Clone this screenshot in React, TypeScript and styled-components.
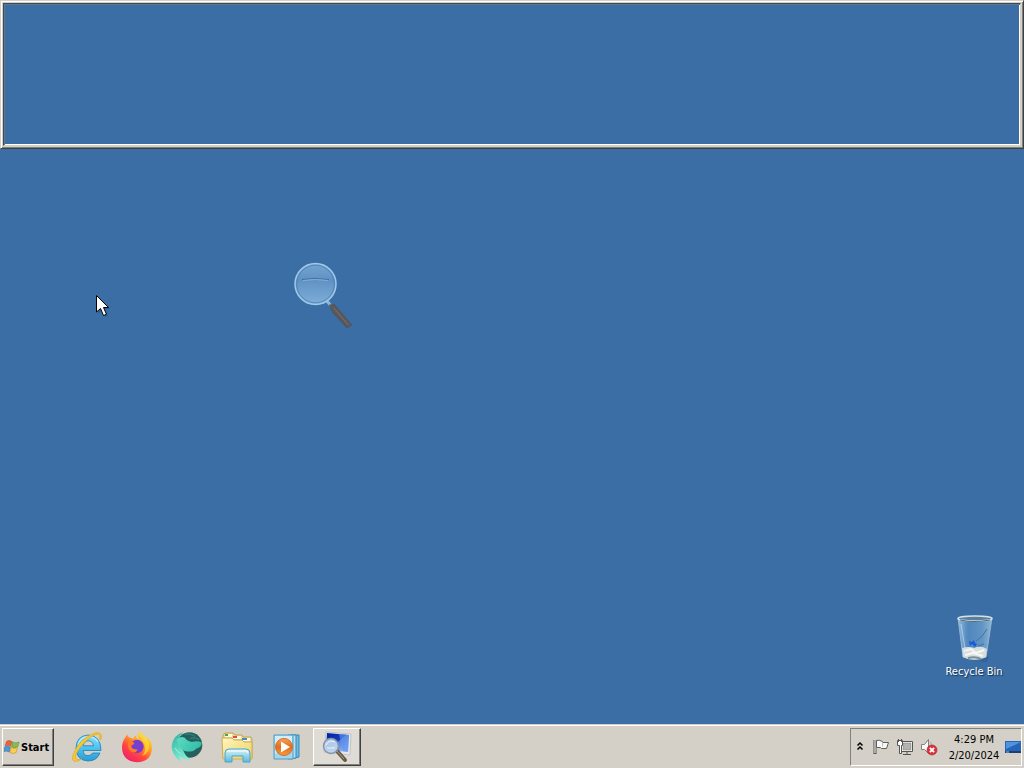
import React from "react";
import styled, { createGlobalStyle, css } from "styled-components";

const GlobalStyle = createGlobalStyle`
  *, *::before, *::after { box-sizing: border-box; }
  body {
    margin: 0;
    background: #3a6ea5;
    font-family: Tahoma, "DejaVu Sans Condensed", "DejaVu Sans", sans-serif;
    font-size: 11px;
    color: #000;
  }
`;

const Screen = styled.div`
  display: flex;
  flex-direction: column;
  min-height: 100vh;
`;

const MagnifierPane = styled.section`
  height: 149px;
  flex: none;
  background: #d4d0c8;
  border: 1px solid;
  border-color: #d4d0c8 #404040 #404040 #d4d0c8;
  box-shadow: inset 1px 1px 0 #fff, inset -1px -1px 0 #808080;
  padding: 2px;
`;

const MagnifierView = styled.div`
  height: 100%;
  background: #3a6ea5;
  border: 1px solid;
  border-color: #404850 #d4d0c8 #d4d0c8 #404850;
  box-shadow: inset 1px 1px 0 #5c7590, inset -1px -1px 0 #fff;
`;

const Desktop = styled.main`
  position: relative;
  flex: 1;
  display: flex;
  justify-content: flex-end;
  align-items: flex-end;
  padding: 0 10px 45px;
`;

const Floating = styled.svg<{ $x: number; $y: number }>`
  position: absolute;
  left: ${(p) => p.$x}px;
  top: ${(p) => p.$y}px;
`;

const DesktopIcon = styled.button`
  display: flex;
  flex-direction: column;
  align-items: center;
  gap: 2px;
  width: 80px;
  padding: 0;
  border: 0;
  background: none;
  color: #fff;
  font: inherit;
  line-height: 14px;
  text-shadow: 1px 1px 1px #16304d;
`;

const Taskbar = styled.footer`
  display: flex;
  align-items: stretch;
  flex: none;
  height: 44px;
  padding: 2px;
  background: #d4d0c8;
  border-top: 1px solid #d4d0c8;
  box-shadow: inset 0 1px 0 #fff;
`;

const raised = css`
  border: 1px solid;
  border-color: #fff #404040 #404040 #fff;
  box-shadow: inset -1px -1px 0 #808080;
`;

const StartButton = styled.button`
  ${raised}
  display: flex;
  align-items: center;
  gap: 1px;
  width: 52px;
  margin-top: 1px;
  padding: 0 0 0 1px;
  background: #d4d0c8;
  color: #000;
  font: inherit;
  font-weight: bold;
`;

const TaskList = styled.nav`
  display: flex;
  gap: 2px;
  flex: 1;
  margin: 1px 0 0 9px;
`;

const TaskButton = styled.button<{ $active?: boolean }>`
  display: flex;
  align-items: center;
  justify-content: center;
  width: 48px;
  padding: 0;
  border: 1px solid transparent;
  background: none;
  ${(p) => p.$active && raised}
  ${(p) => p.$active && "background: #dfdcd6;"}
`;

const Tray = styled.aside`
  display: flex;
  align-items: center;
  margin-top: 1px;
  padding-left: 4px;
  border: 1px solid;
  border-color: #808080 #fff #fff #808080;
`;

const TrayButton = styled.button<{ $width?: number }>`
  display: flex;
  align-items: center;
  justify-content: center;
  width: ${(p) => p.$width ?? 24}px;
  height: 24px;
  padding: 0;
  border: 0;
  background: none;
`;

const Clock = styled.time`
  width: 58px;
  padding-top: 2px;
  margin-right: 2px;
  text-align: center;
  line-height: 16px;
`;

function WindowsFlag() {
  return (
    <svg width="16" height="16" viewBox="0 0 16 16" aria-hidden="true">
      <path d="M2.6 2.2Q5.2.5 8 2.5L6.7 7.3Q4 5.5 1.1 7Z" fill="#e8633c" stroke="#a94b2b" strokeWidth=".5" />
      <path d="M8.8 2.9Q11.8 4.8 15.1 3L13.7 7.8Q10.5 9.5 7.5 7.7Z" fill="#86bd4c" stroke="#52822c" strokeWidth=".5" />
      <path d="M.8 7.9Q3.7 6.4 6.4 8.2L5.1 13Q2.2 11.3-.4 12.7Z" fill="#4c99d8" stroke="#315f9d" strokeWidth=".5" />
      <path d="M7.2 8.6Q10.3 10.4 13.5 8.7L12.1 13.6Q9 15.4 5.9 13.5Z" fill="#fad04b" stroke="#ba861f" strokeWidth=".5" />
    </svg>
  );
}

function ExplorerLogo() {
  return (
    <svg width="32" height="32" viewBox="0 0 32 32" aria-hidden="true">
      <defs>
        <linearGradient id="ie" x2="0" y2="1">
          <stop stopColor="#8be0fa" />
          <stop offset=".5" stopColor="#4cc2ee" />
          <stop offset="1" stopColor="#2a9bd6" />
        </linearGradient>
      </defs>
      <path
        d="M30 19.5H12.2Q12.5 24.7 17 24.7Q20 24.7 21.5 22H29Q26 30 16.9 30Q5.2 29.2 5 17Q5.5 4.8 17 4Q30 4.7 30 19.5ZM12.3 14.8H22.5Q21.7 9.8 17.1 9.8Q13 10 12.3 14.8Z"
        fill="url(#ie)" stroke="#1680bc" strokeWidth=".8" fillRule="evenodd"
      />
      <path d="M7 14Q9 6 17 5.6Q24 5.8 27 11" fill="none" stroke="#b9effc" strokeWidth="1.2" />
      <path
        d="M29.5 9Q31.5 4 29 2.3Q25.5.5 19.5 4Q8.8 9.5 4 19.5Q-.5 28.5 3 30.2Q6 31.3 10.5 28Q5.5 29.7 4.7 27.2Q3.9 23.8 8.2 17.6Q13.8 9.4 21.8 4.7Q26.8 2.1 28.5 4Q29.5 5.3 28.5 8Z"
        fill="#f7ca35" stroke="#e0ab25" strokeWidth=".8"
      />
    </svg>
  );
}

function FirefoxLogo() {
  return (
    <svg width="32" height="32" viewBox="0 0 32 32" aria-hidden="true">
      <defs>
        <linearGradient id="fx" x1=".9" x2=".2" y2="1">
          <stop stopColor="#fff04a" />
          <stop offset=".35" stopColor="#ffac24" />
          <stop offset=".65" stopColor="#ff4c3c" />
          <stop offset="1" stopColor="#f5156c" />
        </linearGradient>
        <radialGradient id="fxGlobe">
          <stop stopColor="#6549d5" />
          <stop offset="1" stopColor="#8a35c8" />
        </radialGradient>
      </defs>
      <path
        d="M4 7Q5.7 4.2 6.1 3.3Q6.8 5.5 8.5 6.6Q11 6.8 12.2 8.1Q12.5 5.6 15.4 4Q14.6 6.8 17.1 8.5Q18.2 5.5 17.2.5Q23.4 4 24.3 9.5Q26.7 8.5 25.8 5.8Q31.8 10.8 31 18Q29.7 31 16 31.2Q1.4 30.2 1 16.5Q.9 11.2 4 7Z"
        fill="url(#fx)"
      />
      <circle cx="16" cy="15.4" r="6.7" fill="url(#fxGlobe)" />
      <path d="M7 11Q9.3 9.3 13.3 11.8Q13.6 13.4 11.1 14.1Q9.9 14.9 10.6 16.5Q12 18.6 16.8 18.4Q14.8 22.9 9.9 20.6Q6.2 17.7 7 11Z" fill="#ff7b2b" />
      <path d="M17.2.5Q19 8.5 23.2 12Q26.1 20.1 21 25.1Q29.1 22.4 28 12Q25.2 4.4 17.2.5Z" fill="#ffda34" opacity=".75" />
      <path d="M2.1 15Q5.9 26.9 17 28Q10 31 4.4 24.5Q1.8 20.5 2.1 15Z" fill="#f33067" opacity=".6" />
    </svg>
  );
}

function TealBirdLogo() {
  return (
    <svg width="32" height="32" viewBox="0 0 32 32" aria-hidden="true">
      <defs>
        <linearGradient id="bird" x2=".4" y2="1">
          <stop stopColor="#2fae98" />
          <stop offset="1" stopColor="#7ceed6" />
        </linearGradient>
        <linearGradient id="wing" x2="1" y2=".4">
          <stop stopColor="#5cdcc4" />
          <stop offset="1" stopColor="#36bfa8" />
        </linearGradient>
      </defs>
      <circle cx="18.5" cy="14" r="12.8" fill="#25605e" />
      <path
        d="M13 .8Q1 4.5.6 15.5Q1.2 25.4 10.5 31Q8.4 28 8.6 25Q12.7 29.2 20 28.2Q14.8 26 13 21L8 9Q8 4 13 .8Z"
        fill="url(#bird)"
      />
      <path
        d="M5.5 9Q8.5 4.8 13.5 6.5Q17.5 11.5 22 10.8Q26 9.2 30.8 11.5Q30.4 16.5 25.5 17.4Q22 21.2 16 20.5Q9.5 19.8 5.5 9Z"
        fill="url(#wing)"
      />
      <path d="M14 3.5Q19 2 24 5.5M19 7.5Q24 6 28 8.5" stroke="#2f7f79" strokeWidth="1.5" fill="none" />
      <path d="M4 17Q6 21 10 23" stroke="#a0f4e2" strokeWidth="1" fill="none" />
    </svg>
  );
}

function FoldersIcon() {
  return (
    <svg width="34" height="32" viewBox="0 0 34 32" aria-hidden="true">
      <defs>
        <linearGradient id="folder" x2="1" y2="1">
          <stop stopColor="#fff7bd" />
          <stop offset="1" stopColor="#edcf68" />
        </linearGradient>
        <linearGradient id="shelf" x2="0" y2="1">
          <stop stopColor="#d9f5fb" />
          <stop offset="1" stopColor="#5db8da" />
        </linearGradient>
      </defs>
      <path d="M3 4L5 2H13L15 4H22L23 6H31L32 8V27H3Z" fill="#efda80" stroke="#c3a456" />
      <path d="M5 3H12V6H5M13 5H21V8H13M22 7H30V10H22" fill="#fff9e4" />
      <path d="M5 3H8V5H5" fill="#4da351" />
      <path d="M13 5H17V7H13" fill="#df4a3c" />
      <path d="M22 7H27V9H22" fill="#3d8ed0" />
      <path d="M2 7H12L14 9H22L24 11H32V28H3Z" fill="url(#folder)" stroke="#cdad5b" />
      <path d="M5 31V22Q5 18 9 18H26Q30 18 30 22V31H23V25H12V31Z" fill="url(#shelf)" stroke="#48a6cb" />
      <path d="M7 21Q7.5 20 9 20H26Q28 20 28 22" stroke="#fff" fill="none" />
    </svg>
  );
}

function MediaPlayerIcon() {
  return (
    <svg width="28" height="28" viewBox="0 0 28 28" aria-hidden="true">
      <defs>
        <linearGradient id="orange" x2="0" y2="1">
          <stop stopColor="#f5a359" />
          <stop offset=".5" stopColor="#e56b1a" />
          <stop offset="1" stopColor="#f59b3c" />
        </linearGradient>
      </defs>
      <path d="M18 2H26V24L18 26Z" fill="#6db9df" stroke="#3989b8" />
      <path d="M15 2H23V25L15 26Z" fill="#b4e1f2" stroke="#3989b8" />
      <path d="M1 2H20V26H1Z" fill="#a3d6ed" stroke="#4b9dc7" />
      <path d="M2 3H19V12Q10 13 2 21Z" fill="#d1eef8" />
      <circle cx="11" cy="14" r="8.5" fill="url(#orange)" stroke="#d76b22" />
      <path d="M8 8.5L17 14L8 19.5Z" fill="#fff" />
    </svg>
  );
}

function MagnifierAppIcon() {
  return (
    <svg width="32" height="32" viewBox="0 0 32 32" aria-hidden="true">
      <defs>
        <linearGradient id="monitor" x2="1" y2="1">
          <stop stopColor="#001f9c" />
          <stop offset=".48" stopColor="#193eb9" />
          <stop offset=".5" stopColor="#507de0" />
          <stop offset="1" stopColor="#a8c9fb" />
        </linearGradient>
      </defs>
      <path d="M5 1L30 3L29 24L3 21Z" fill="#e6e9ea" stroke="#bfc4c8" />
      <path d="M6 2L28 4L27 21L5 19Z" fill="url(#monitor)" />
      <path d="M18 3L28 4L27 21L22 20Z" fill="#5c93ec" opacity=".65" />
      <path d="M16 20L24 29" stroke="#665a4a" strokeWidth="4" strokeLinecap="round" />
      <path d="M16 20L23 28" stroke="#b59e77" strokeWidth="1" />
      <circle cx="10" cy="15" r="7.5" fill="#bdd4ec" fillOpacity=".95" stroke="#8496a8" strokeWidth="1.5" />
      <path d="M5 14Q8 8 14 11M6 17H14" stroke="#e9f6ff" fill="none" />
    </svg>
  );
}

function RecycleBinIcon() {
  return (
    <svg width="40" height="48" viewBox="0 0 40 48" aria-hidden="true">
      <defs>
        <linearGradient id="glass" x2="1">
          <stop stopColor="#b4d9f2" stopOpacity=".75" />
          <stop offset=".3" stopColor="#629bd1" stopOpacity=".55" />
          <stop offset=".7" stopColor="#79aed9" stopOpacity=".6" />
          <stop offset="1" stopColor="#b9d6ea" stopOpacity=".7" />
        </linearGradient>
      </defs>
      <path d="M28 44L35 41L33 47L25 47Z" fill="#294f77" opacity=".3" />
      <path d="M4 3L9 42Q20 47 32 42L38 3Z" fill="url(#glass)" stroke="#91b5d1" />
      <path d="M8 33Q15 31 20 33Q27 30 33 34L32 42Q20 47 9 42Z" fill="#d7dedf" />
      <path d="M10 36L17 34L22 38L30 35M11 40L19 38L29 41" stroke="#f6f7f3" strokeWidth="2" fill="none" />
      <path d="M14 43Q22 41 27 44" stroke="#7d8e96" strokeWidth="2" fill="none" />
      <path d="M15 26L18 27L20 25L21 28L23 29L21 32L18 29L16 31Z" fill="#1a5bd8" />
      <path d="M22 26Q29 22 33 14M24 31L30 29" stroke="#4074a5" fill="none" />
      <ellipse cx="21" cy="3.5" rx="17" ry="2.5" fill="#577f9e" stroke="#d7e0e4" strokeWidth="1.5" />
      <path d="M6 5Q19 8 36 5" stroke="#4b687c" fill="none" />
      <path d="M7 9L12 39" stroke="#cae5f5" opacity=".6" />
    </svg>
  );
}

function NotificationFlag() {
  return (
    <svg width="18" height="18" viewBox="0 0 18 18" aria-hidden="true">
      <path d="M3 2V16" stroke="#555" strokeWidth="3" />
      <path d="M3 2V15" stroke="#fff" />
      <path d="M4.5 2.5Q7 1.5 10.5 3.5V4.5H16.5L14.5 10.5H9.5L8.5 9.5H4.5Z" fill="#f8f8f5" stroke="#5e5e5e" />
      <path d="M10.5 4V8.5" stroke="#bbb" />
    </svg>
  );
}

const WideGlyph = styled.svg`
  flex: none;
`;

function NetworkIcon() {
  return (
    <WideGlyph width="18" height="18" viewBox="0 0 18 18" aria-hidden="true">
      <path d="M5.5 3.5H16.5V13.5H5.5Z" fill="#fff" stroke="#555" />
      <path d="M7 5H15V12H7Z" fill="#b4b3ad" stroke="#777" strokeWidth=".5" />
      <path d="M11 14V16M7 16.5H15" stroke="#555" />
      <path d="M1.5 2.5H6.5V7.5H5.5V15.5H3.5V7.5H1.5Z" fill="#fff" stroke="#555" />
      <path d="M2.5 1V4M5.5 1V4" stroke="#555" />
    </WideGlyph>
  );
}

function MutedIcon() {
  return (
    <svg width="18" height="18" viewBox="0 0 18 18" aria-hidden="true">
      <path d="M1.5 6.5H4.5L8.5 1.5V15.5L4.5 11.5H1.5Z" fill="#f8f8f5" stroke="#808080" />
      <path d="M10.5 4Q12 6 11.5 9" fill="none" stroke="#aaa" />
      <circle cx="12" cy="12" r="5" fill="#d9343b" stroke="#b42b32" strokeWidth=".7" />
      <path d="M9.9 9.9L14.1 14.1M14.1 9.9L9.9 14.1" stroke="#fff" strokeWidth="1.8" />
    </svg>
  );
}

const pinned = [
  { name: "Internet Explorer", Icon: ExplorerLogo },
  { name: "Firefox", Icon: FirefoxLogo },
  { name: "Web browser", Icon: TealBirdLogo },
  { name: "Windows Explorer", Icon: FoldersIcon },
  { name: "Windows Media Player", Icon: MediaPlayerIcon },
  { name: "Magnifier", Icon: MagnifierAppIcon, active: true },
];

export default function App() {
  return (
    <>
      <GlobalStyle />
      <Screen>
        <MagnifierPane aria-label="Magnified view">
          <MagnifierView />
        </MagnifierPane>
        <Desktop>
          <Floating $x={291} $y={111} width="64" height="72" viewBox="0 0 64 72" aria-hidden="true">
            <defs>
              <linearGradient id="lens" x2="0" y2="1">
                <stop stopColor="#76a4cf" />
                <stop offset=".4" stopColor="#5f92c4" />
                <stop offset="1" stopColor="#7faed8" />
              </linearGradient>
              <linearGradient id="handle" x2="1" y1="1">
                <stop stopColor="#333b42" />
                <stop offset=".5" stopColor="#5f5a5c" />
                <stop offset="1" stopColor="#423d40" />
              </linearGradient>
            </defs>
            <path d="M36 41L40 46" stroke="#8db7dc" strokeWidth="3" />
            <path d="M38 45L43 44L61 65L56 68L42 53Z" fill="url(#handle)" stroke="#415261" strokeWidth=".5" />
            <path d="M43 48L57 65" stroke="#7d6c69" />
            <circle cx="24.5" cy="24" r="20.5" fill="url(#lens)" stroke="#a0c8e9" strokeWidth="1.5" />
            <circle cx="24.5" cy="24" r="18.8" fill="none" stroke="#3f73a7" strokeWidth=".6" />
            <path d="M11 19.5Q24 17.5 38 19.5" fill="none" stroke="#3e709f" />
            <path d="M12 20.5Q24 18.5 37 20.5" fill="none" stroke="#85afd2" />
          </Floating>
          <Floating $x={96} $y={146} width="16" height="24" viewBox="0 0 16 24" aria-hidden="true">
            <path d="M2 3V19L6 15L9 22L12 21L9 14H14Z" fill="#244f7b" opacity=".5" />
            <path d="M.5.5V17L4.5 13.5L7.5 20.5L10.5 19.3L7.5 12.5H12.5Z" fill="#fff" stroke="#000" />
          </Floating>
          <DesktopIcon>
            <RecycleBinIcon />
            Recycle Bin
          </DesktopIcon>
        </Desktop>
        <Taskbar>
          <StartButton>
            <WindowsFlag />
            Start
          </StartButton>
          <TaskList aria-label="Applications">
            {pinned.map(({ name, Icon, active }) => (
              <TaskButton key={name} aria-label={name} $active={active}>
                <Icon />
              </TaskButton>
            ))}
          </TaskList>
          <Tray>
            <TrayButton $width={10} aria-label="Show hidden icons">
              <svg width="8" height="12" viewBox="0 0 8 12" aria-hidden="true">
                <path d="M1.5 4.5L4 2L6.5 4.5M1.5 8.5L4 6L6.5 8.5" fill="none" stroke="#000" strokeWidth="1.5" />
              </svg>
            </TrayButton>
            <TrayButton $width={32} aria-label="Action Center">
              <NotificationFlag />
            </TrayButton>
            <TrayButton $width={16} aria-label="Network">
              <NetworkIcon />
            </TrayButton>
            <TrayButton $width={32} aria-label="Volume muted">
              <MutedIcon />
            </TrayButton>
            <Clock dateTime="2024-02-20T16:29">
              4:29 PM
              <br />
              2/20/2024
            </Clock>
            <TrayButton $width={16} aria-label="Show desktop">
              <svg width="16" height="14" viewBox="0 0 16 14" aria-hidden="true">
                <path d="M0 1H16V11H0Z" fill="#2864b8" />
                <path d="M1 2H16L1 9Z" fill="#4f94df" />
                <path d="M0 11H16V13H0Z" fill="#174174" />
                <path d="M1 12H4" stroke="#9cc9ea" />
              </svg>
            </TrayButton>
          </Tray>
        </Taskbar>
      </Screen>
    </>
  );
}
